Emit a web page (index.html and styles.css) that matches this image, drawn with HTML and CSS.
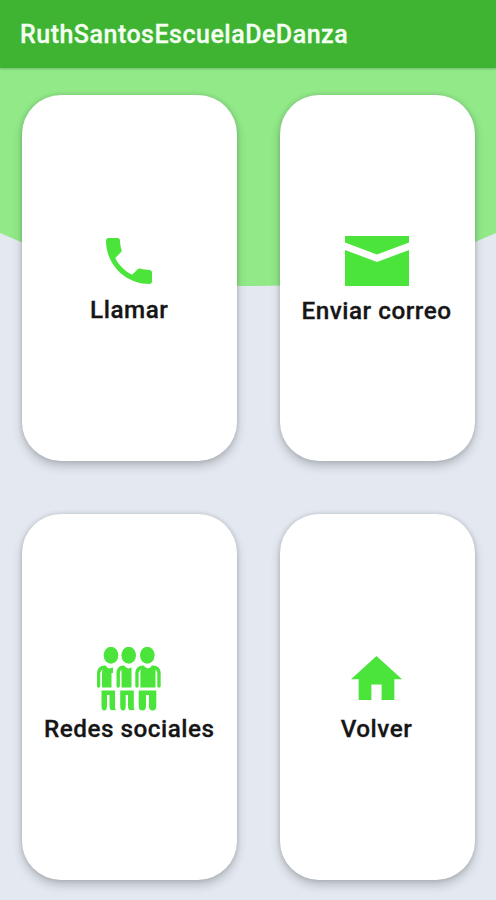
FILE: index.html
```html
<!DOCTYPE html>
<html lang="es">
<head>
<meta charset="utf-8">
<title>RuthSantosEscuelaDeDanza</title>
<link rel="stylesheet" href="styles.css">
</head>
<body>
<header class="bar"><h1 class="title">RuthSantosEscuelaDeDanza</h1></header>
<main class="screen">
  <svg class="backdrop" viewBox="0 0 496 219" preserveAspectRatio="none" aria-hidden="true"><path d="M0 0H496V165Q380 218 258 218H238Q116 218 0 165Z" fill="#91e988"/></svg>
  <div class="grid">
    <a class="card">
      <span class="icon"><svg width="46" height="46" viewBox="3 3 18 18"><path d="M6.62 10.79c1.44 2.83 3.76 5.14 6.59 6.59l2.2-2.2c.27-.27.67-.36 1.02-.24 1.12.37 2.33.57 3.57.57.55 0 1 .45 1 1V20c0 .55-.45 1-1 1C10.61 21 3 13.39 3 4c0-.55.45-1 1-1h3.5c.55 0 1 .45 1 1 0 1.25.2 2.45.57 3.57.11.35.03.74-.25 1.02l-2.2 2.2z"/></svg></span>
      <span class="label">Llamar</span>
    </a>
    <a class="card card-right">
      <span class="icon"><svg width="64" height="50" viewBox="0 0 64 50"><path d="M0 0H64V6.500L32 18.500 0 6.500ZM0 14L32 26 64 14V50H0Z"/></svg></span>
      <span class="label label-mail">Enviar correo</span>
    </a>
    <a class="card card-people">
      <span class="icon"><svg class="people" width="64" height="64" viewBox="0 0 64 64">
        <ellipse cx="14" cy="8.300" rx="7.300" ry="8.500"/><ellipse cx="31.700" cy="8.300" rx="7.300" ry="8.500"/><ellipse cx="50.300" cy="8.300" rx="7.300" ry="8.500"/>
        <path class="arm" d="M1.700 39V26Q2 20.500 8 20.200M21.200 39V26Q21.500 20.500 26.500 20.200M40 39V26Q40.300 20.500 46 20.200M55.500 20.200Q61.800 20.500 62 26V39"/>
        <path d="M5 25.500Q5 22 7 18.700L12 21.500 16 20.500V26L14.500 26V40.500H5ZM24.300 25.500Q24.300 22 25.500 18.700L31.500 21.500 34.500 20.500V40.500H24.300ZM43.300 25.500Q43.300 22 45 18.700L51 21.500 57 18.700Q58.700 22 58.700 25.500V40.500H43.300Z"/>
        <path d="M4.500 43.500H18V61L19 62.500Q17.500 63.500 16 63 12.500 64 12.500 59V48H10V59Q10 63.500 7.200 63.500 4.500 63.500 4.500 59ZM23.200 43.500H36.800V61L37.500 62.500Q36 63.500 34.500 63 31 64 31 59V48H28.700V59Q28.700 63.500 26 63.500 23.200 63.500 23.200 59ZM41.700 43.500H59.300V59Q59.300 63.500 55.500 63.500 52 63.500 52 59V48H49V59Q49 63.500 45.300 63.500 41.700 63.500 41.700 59Z"/>
        <path class="gap" d="M4.200 25.500V41M23.700 25.500V41M42.500 25.500V41M59.300 25.500V41"/>
      </svg></span>
      <span class="label">Redes sociales</span>
    </a>
    <a class="card card-right card-home">
      <span class="icon"><svg width="51" height="44" viewBox="2 3 20 17" preserveAspectRatio="none"><path d="M10 20v-6h4v6h5v-8h3L12 3 2 12h3v8z"/></svg></span>
      <span class="label">Volver</span>
    </a>
  </div>
</main>
</body>
</html>
```
FILE: styles.css
```css
* { box-sizing: border-box; }
body {
  margin: 0;
  height: 900px;
  overflow: hidden;
  display: flex;
  flex-direction: column;
  background: #e4e8f0;
  font-family: Roboto, sans-serif;
}
.bar {
  height: 68px;
  flex: none;
  padding: 2px 0 0 20px;
  display: flex;
  align-items: center;
  background: #3eb432;
  box-shadow: 0 1px 2px rgba(0, 0, 0, .22);
  z-index: 1;
}
.title {
  margin: 0;
  font-size: 25px;
  font-weight: 500;
  line-height: 30px;
  letter-spacing: .5px;
  color: #f4fff2;
  -webkit-text-stroke: .3px #f4fff2;
}
.screen { position: relative; flex: 1; }
.backdrop {
  position: absolute;
  top: 0;
  left: 0;
  width: 100%;
  height: 219px;
}
.grid {
  position: relative;
  display: grid;
  grid-template-columns: 215.5px 195px;
  grid-template-rows: 366px 366px;
  column-gap: 43px;
  row-gap: 53px;
  padding: 26.6px 21px 0 21.500px;
}
.card {
  display: flex;
  flex-direction: column;
  align-items: center;
  background: #fff;
  border-radius: 39px;
  box-shadow: 0 5px 10px rgba(40, 50, 50, .25), 0 0 4px rgba(40, 50, 50, .18);
}
.card-right { padding-right: 2px; }
.icon {
  height: 198px;
  padding-top: 134px;
  display: flex;
  align-items: center;
  justify-content: center;
}
.icon svg { fill: #4be43b; display: block; }
.card-home .icon { padding-top: 131px; }
.card-people .icon { padding-top: 133px; }
.people .arm { fill: none; stroke: #4be43b; stroke-width: 3.4; stroke-linecap: round; }
.people .gap { stroke: #fff; stroke-width: 1.3; }
.label {
  font-size: 24.3px;
  font-weight: 500;
  line-height: 34px;
  letter-spacing: .5px;
  white-space: nowrap;
  color: #161616;
  -webkit-text-stroke: .3px #161616;
}
.label-mail { padding-top: 1px; }
```
